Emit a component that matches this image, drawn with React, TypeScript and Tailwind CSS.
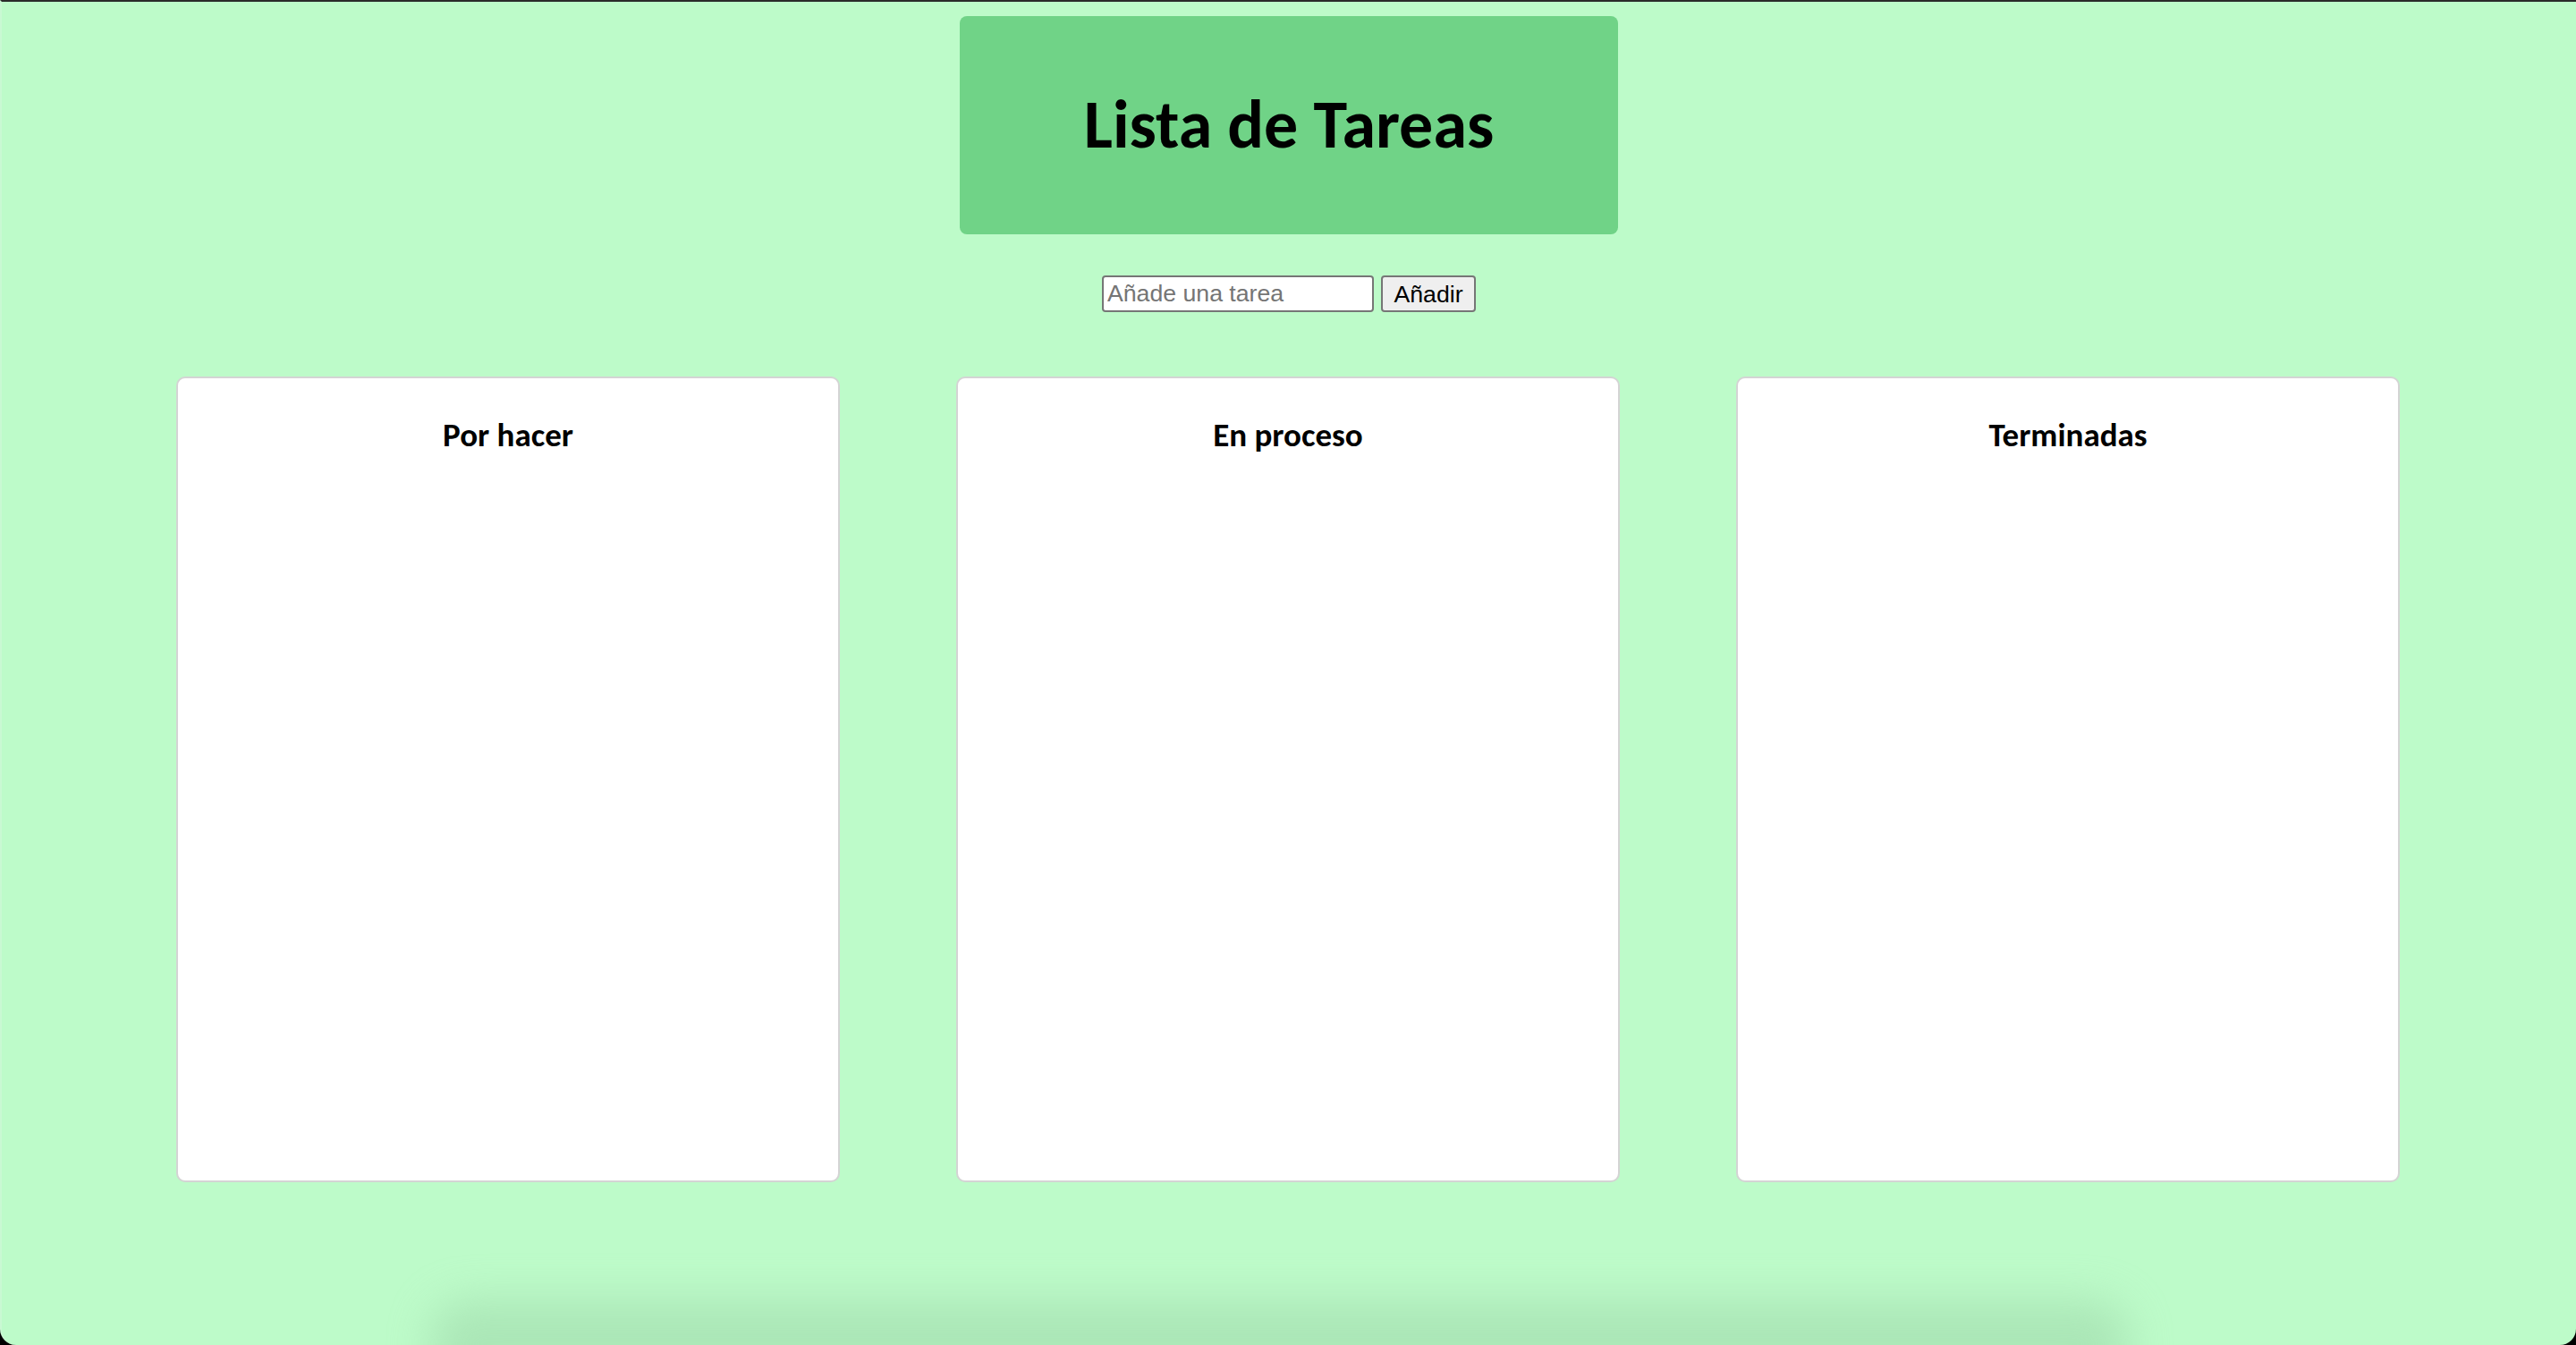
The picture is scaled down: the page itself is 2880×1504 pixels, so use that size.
import React from "react";

const calibri = { fontFamily: "Carlito, Lato, 'Open Sans', sans-serif" };

function Column({ title }: { title: string }) {
  return (
    <div className="w-[742px] h-[901px] bg-white border-2 border-[#d4d4d4] rounded-[10px] flex flex-col items-center pt-[42px]">
      <h3 className="font-bold text-[37px] leading-[1.2] text-black" style={calibri}>
        {title}
      </h3>
    </div>
  );
}

export default function App() {
  return (
    <div className="w-[2880px] h-[1504px] bg-black overflow-hidden">
      <div className="relative w-full h-full bg-[#bdfbc9] border-t-2 border-t-[#2a2a2a] border-l-2 border-l-[#c9f8d3] rounded-b-[18px] overflow-hidden flex flex-col items-center">
        <div className="mt-[16px] w-[736px] h-[244px] bg-[#70d387] rounded-[8px] flex items-center justify-center">
          <h1 className="font-bold text-[76px] leading-[1.2] text-black" style={calibri}>
            Lista de Tareas
          </h1>
        </div>

        <div className="mt-[46px] flex items-center gap-[8px]" style={{ fontFamily: "'Liberation Sans', Arial, sans-serif" }}>
          <input
            type="text"
            placeholder="Añade una tarea"
            className="w-[304px] h-[41px] bg-white border-2 border-[#767676] rounded-[4px] px-[4px] text-[26.67px] text-black placeholder:text-[#757575] outline-none"
          />
          <button className="h-[41px] w-[106px] bg-[#efefef] border-2 border-[#767676] rounded-[4px] text-[26.67px] text-black flex items-center justify-center">
            Añadir
          </button>
        </div>

        <div className="mt-[72px] w-full flex justify-center gap-[130px] pr-[2px]">
          <Column title="Por hacer" />
          <Column title="En proceso" />
          <Column title="Terminadas" />
        </div>

        <div className="absolute left-[480px] right-[500px] bottom-[-50px] h-[100px] bg-[#9fd9ab] opacity-60 blur-[24px] rounded-[40px]" />
      </div>
    </div>
  );
}
